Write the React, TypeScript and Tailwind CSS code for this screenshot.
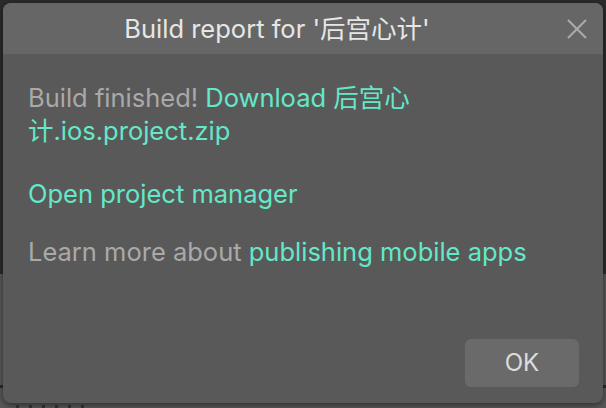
import React from "react";

export default function App() {
  const font = { fontFamily: 'Inter, "Noto Sans CJK SC", sans-serif' };
  return (
    <div className="relative w-[606px] h-[408px] overflow-hidden bg-[#2b2b2b]" style={font}>
      {/* background page */}
      <div className="absolute left-0 right-0 top-[274px] bottom-0 bg-[#585858]">
        <div className="mt-[111px] h-[3px] bg-[#2a2a2a]" />
        <div className="mt-[17px] ml-[16px] flex gap-[10px]">
          <div className="w-[3px] h-[6px] bg-[#333]" />
          <div className="w-[3px] h-[6px] bg-[#333]" />
          <div className="w-[3px] h-[6px] bg-[#333]" />
          <div className="w-[3px] h-[6px] bg-[#333]" />
          <div className="w-[3px] h-[6px] bg-[#333]" />
          <div className="w-[3px] h-[6px] bg-[#333]" />
        </div>
      </div>
      {/* dialog */}
      <div className="absolute left-[3px] top-[3px] w-[600px] h-[400px] rounded-[8px] bg-[#595959] shadow-[0_2px_6px_rgba(0,0,0,0.5)] flex flex-col overflow-hidden">
        <div className="h-[51px] shrink-0 bg-[#666666] flex items-center">
          <div className="flex-1 text-center text-[25.5px] leading-[30px] text-[#e6e6e6]">
            Build report for '后宫心计'
          </div>
          <div className="w-[52px] h-full flex items-center justify-center">
            <svg width="22" height="22" viewBox="0 0 22 22">
              <path d="M2 2 L20 20 M20 2 L2 20" stroke="#a9a9a9" strokeWidth="2.2" />
            </svg>
          </div>
        </div>
        <div className="flex-1 px-[25px] pt-[27px] text-[25.5px] text-[#a9a9a9]">
          <p className="leading-[33px]">
            Build finished! <span className="text-[#64e8c8]">Download 后宫心计.ios.project.zip</span>
          </p>
          <p className="mt-[32px] leading-[30px] text-[#64e8c8]">Open project manager</p>
          <p className="mt-[28px] leading-[30px]">
            Learn more about <span className="text-[#64e8c8]">publishing mobile apps</span>
          </p>
        </div>
        <div className="flex justify-end px-[24px] pb-[16px]">
          <button className="w-[114px] h-[48px] rounded-[6px] bg-[#6a6a6a] text-[24px] text-[#dcdcdc]">
            OK
          </button>
        </div>
      </div>
    </div>
  );
}
